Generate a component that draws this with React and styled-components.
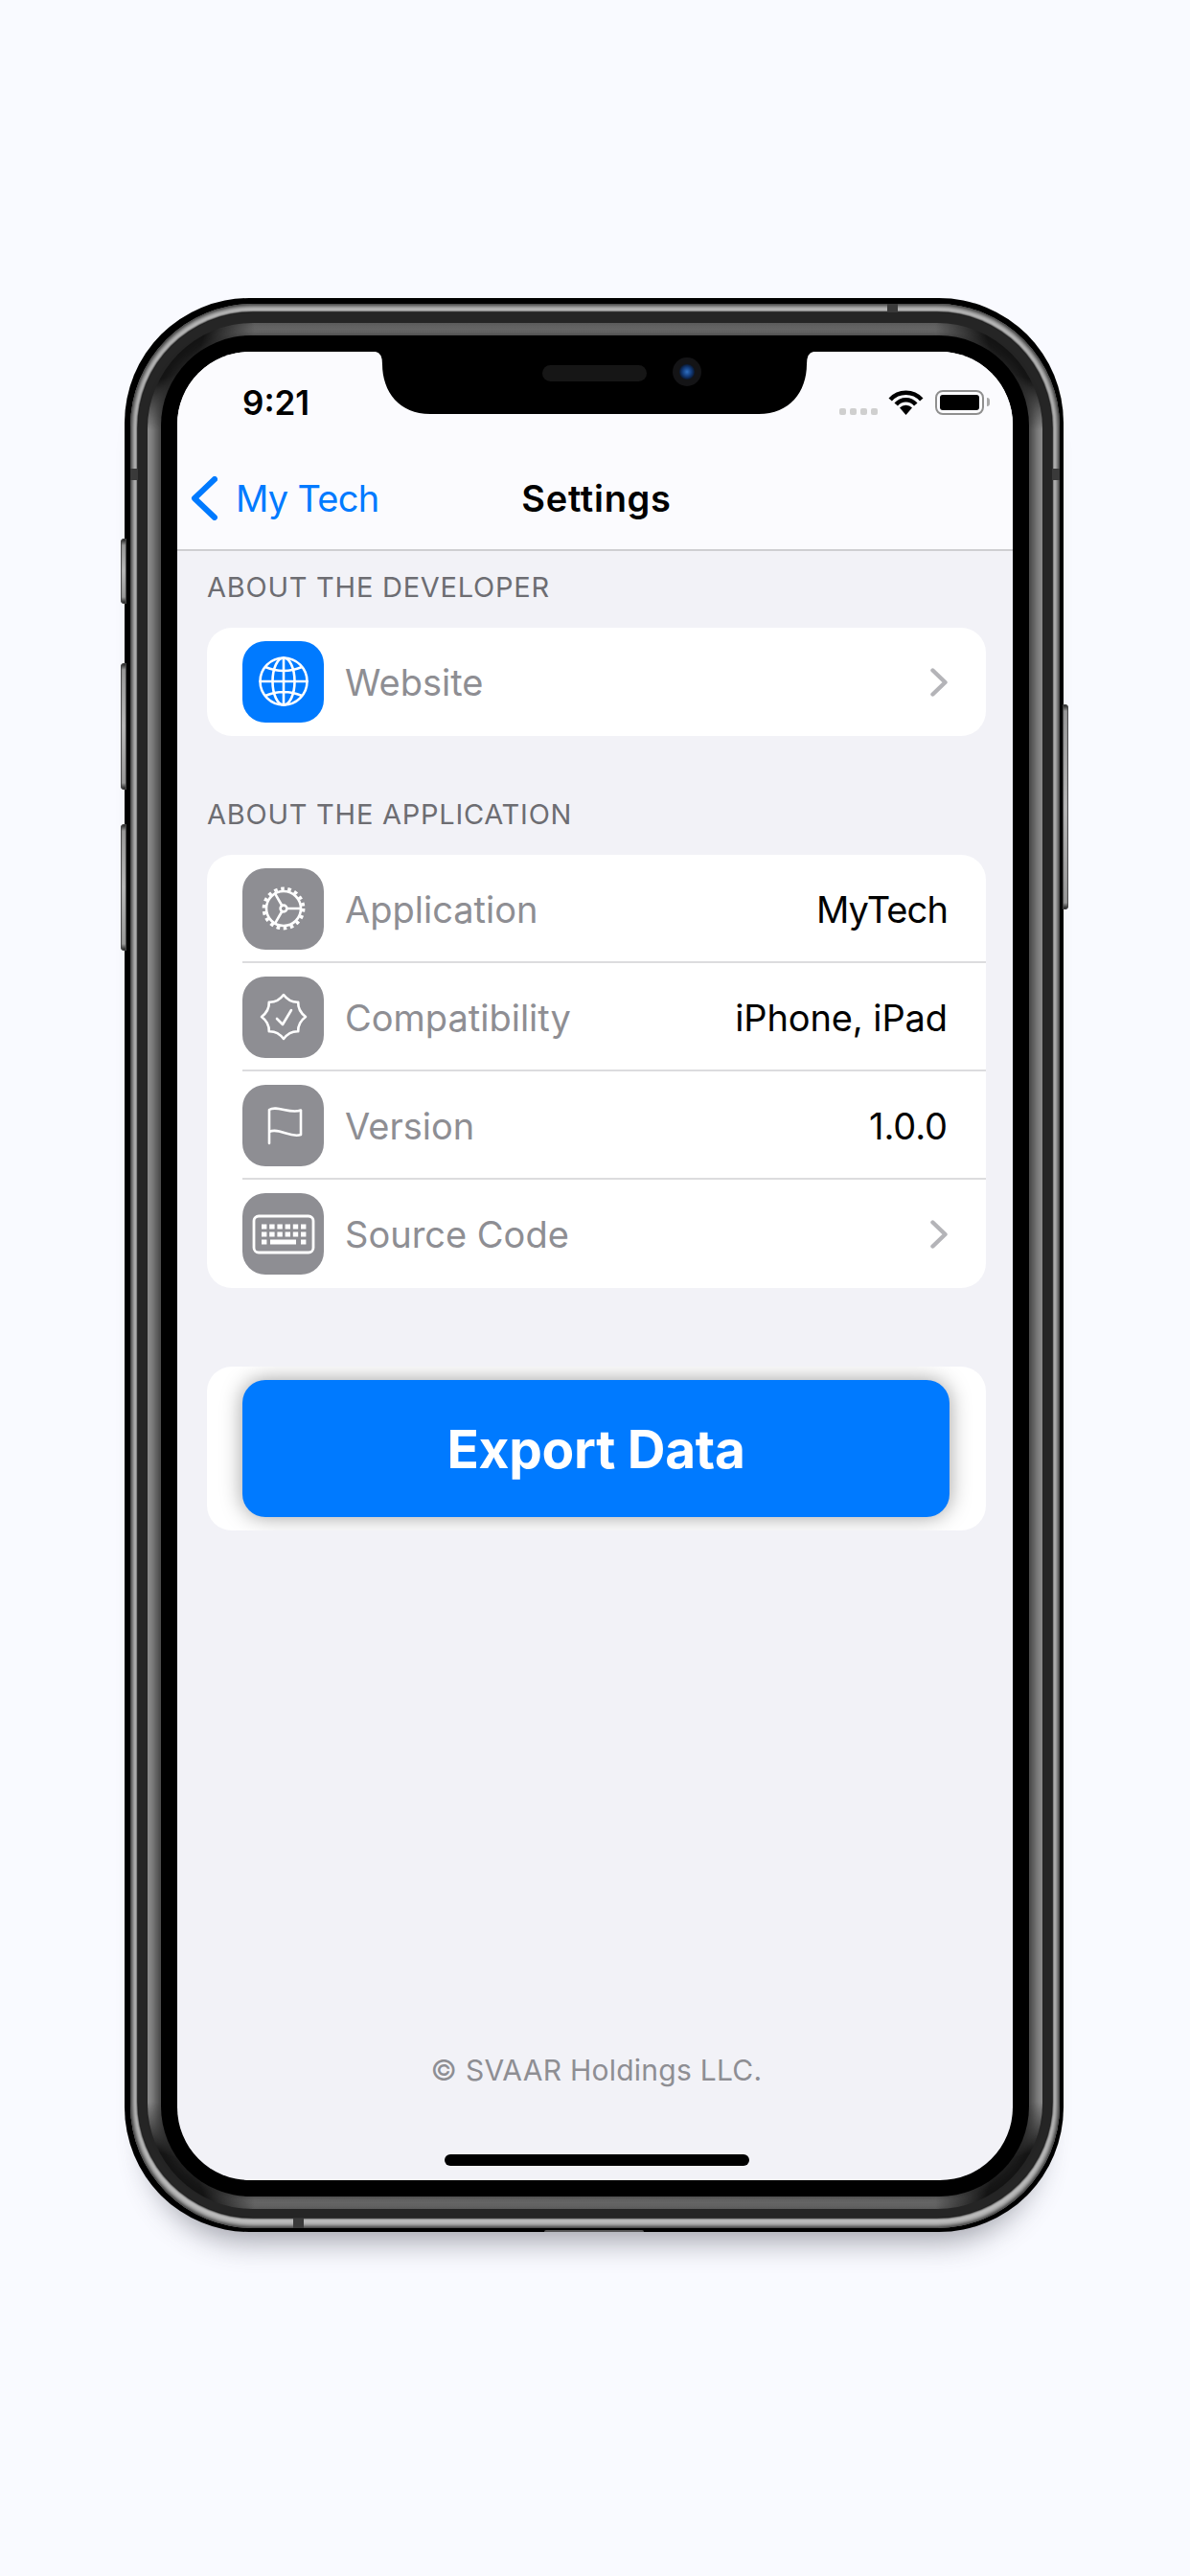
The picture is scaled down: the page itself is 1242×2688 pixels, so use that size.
import React from "react";
import styled, { createGlobalStyle } from "styled-components";

const GlobalStyle = createGlobalStyle`
  html, body {
    margin: 0;
    padding: 0;
    background: #f9faff;
  }
  * {
    box-sizing: border-box;
  }
`;

const Page = styled.div`
  width: 1242px;
  height: 2688px;
  padding: 311px 0 0 130px;
  background: #f9faff;
  font-family: Inter, "Noto Sans", sans-serif;
  overflow: hidden;
`;

const Phone = styled.div`
  position: relative;
  display: flex;
  width: 980px;
  height: 2018px;
  padding: 6px 4px 4px 6px;
  border-radius: 130px;
  background: #000;
  box-shadow: 0 34px 30px -24px rgba(70, 72, 84, 0.48);
`;

const SteelRing = styled.div`
  flex: 1;
  display: flex;
  padding: 9px 8px 11px 8px;
  border-radius: 128px;
  background: #bcbcbc;
  box-shadow: inset 0 0 4px 2px #2a2a2a;
`;

const DarkRing = styled.div`
  flex: 1;
  display: flex;
  padding: 11px 10px 9px 10px;
  border-radius: 120px;
  background: #252525;
  box-shadow: 0 0 2px 1px #000;
`;

const GreyRing = styled.div`
  flex: 1;
  display: flex;
  padding: 13px 14px 13px 14px;
  border-radius: 110px;
  background:
    radial-gradient(circle at 0 0, #141414 60px, rgba(20, 20, 20, 0) 112px),
    radial-gradient(circle at 100% 0, #141414 60px, rgba(20, 20, 20, 0) 112px),
    radial-gradient(circle at 0 100%, #141414 60px, rgba(20, 20, 20, 0) 112px),
    radial-gradient(circle at 100% 100%, #141414 60px, rgba(20, 20, 20, 0) 112px),
    linear-gradient(to bottom, #5a5a5a 0, #787878 13px, #8c8c8c 40px, #8c8c8c calc(100% - 40px), #787878 calc(100% - 13px), #5a5a5a 100%);
`;

const Bezel = styled.div`
  flex: 1;
  display: flex;
  padding: 17px;
  border-radius: 94px;
  background: #000;
  box-shadow:
    -7px 0 8px -1px rgba(40, 40, 40, 0.7),
    7px 0 8px -1px rgba(40, 40, 40, 0.7);
`;

const Screen = styled.div`
  position: relative;
  flex: 1;
  display: flex;
  flex-direction: column;
  border-radius: 76px;
  background: #f2f2f7;
  overflow: hidden;
`;

const SideButton = styled.div`
  position: absolute;
  top: ${(p) => p.$top}px;
  height: ${(p) => p.$height}px;
  width: 6px;
  ${(p) => (p.$right ? "right: -5px;" : "left: -4px;")}
  border-radius: ${(p) => (p.$right ? "0 4px 4px 0" : "4px 0 0 4px")};
  background: linear-gradient(to bottom, #111 0, #999 7px, #b8b8b8 50%, #999 calc(100% - 7px), #111 100%);
  box-shadow: inset 0 0 1px 1px #444;
`;

const Band = styled.div`
  position: absolute;
  background: #3a3a3a;
  top: ${(p) => p.$top}px;
  left: ${(p) => p.$left}px;
  width: ${(p) => p.$width}px;
  height: ${(p) => p.$height}px;
`;

const BottomBump = styled.div`
  position: absolute;
  left: 438px;
  bottom: 0;
  width: 104px;
  height: 2px;
  border-radius: 3px 3px 0 0;
  background: #555;
`;

const Notch = styled.svg`
  position: absolute;
  top: 0;
  left: 207px;
`;

const Header = styled.header`
  height: 208px;
  background: #fbfbfe;
  border-bottom: 2px solid #cfcfd2;
`;

const StatusBar = styled.div`
  display: flex;
  justify-content: space-between;
  height: 100px;
  padding: 38px 24px 0 68px;
`;

const Time = styled.span`
  font-size: 35px;
  line-height: 30px;
  font-weight: 600;
  color: #000;
`;

const StatusIcons = styled.div`
  display: flex;
  align-items: flex-end;
  height: 27px;
  margin-top: 1px;
`;

const SignalDots = styled.div`
  display: flex;
  gap: 4px;
  margin-right: 11px;
`;

const SignalDot = styled.span`
  width: 7px;
  height: 7px;
  border-radius: 2px;
  background: #cfcfcf;
`;

const Battery = styled.div`
  width: 51px;
  height: 26px;
  margin-left: 12px;
  padding: 3px;
  border: 2px solid #8f8f8f;
  border-radius: 8px;
`;

const BatteryFill = styled.div`
  height: 100%;
  border-radius: 3px;
  background: #000;
`;

const BatteryNub = styled.div`
  width: 3px;
  height: 9px;
  margin: 0 0 9px 3px;
  border-radius: 0 3px 3px 0;
  background: #a8a8a8;
`;

const NavBar = styled.nav`
  display: grid;
  grid-template-columns: 1fr auto 1fr;
  align-items: center;
  height: 106px;
  padding-left: 3px;
`;

const BackLink = styled.a`
  display: flex;
  align-items: center;
  gap: 19px;
  margin-left: 11px;
  font-size: 38px;
  letter-spacing: -0.7px;
  color: #007aff;
`;

const NavTitle = styled.h1`
  margin: 0;
  font-size: 38px;
  font-weight: 600;
  letter-spacing: 0.7px;
  color: #000;
`;

const Body = styled.main`
  flex: 1;
  display: flex;
  flex-direction: column;
  padding: 16px 28px 15px 31px;
`;

const Section = styled.section`
  margin-bottom: 60px;
`;

const SectionLabel = styled.h2`
  margin: 0 0 20px;
  font-size: 29px;
  line-height: 44px;
  font-weight: 400;
  letter-spacing: 0.75px;
  color: #6d6d72;
`;

const Card = styled.div`
  border-radius: 26px;
  background: #fff;
  overflow: hidden;
`;

const Row = styled.div`
  display: flex;
  align-items: center;
  height: 113px;
  margin-left: 37px;
  padding-right: 40px;
  box-shadow: ${(p) => (p.$last ? "none" : "inset 0 -2px 0 #dcdcde")};
`;

const IconTile = styled.div`
  display: flex;
  width: 85px;
  height: 85px;
  margin-right: 22px;
  border-radius: 24px;
  background: ${(p) => p.$color};
`;

const RowLabel = styled.span`
  flex: 1;
  font-size: 38px;
  letter-spacing: 0;
  color: #8e8e93;
`;

const RowValue = styled.span`
  font-size: 38px;
  letter-spacing: ${(p) => (p.$tight ? "-0.9px" : "-0.1px")};
  color: #000;
`;

const ButtonCard = styled(Card)`
  display: flex;
  height: 171px;
  margin-top: 22px;
  padding: 14px 38px 14px 37px;
`;

const ExportButton = styled.button`
  flex: 1;
  border: 0;
  border-radius: 24px;
  font-family: inherit;
  font-size: 55px;
  font-weight: 700;
  letter-spacing: -0.3px;
  color: #fff;
  background: #007aff;
  box-shadow: 0 0 22px rgba(0, 0, 0, 0.38);
`;

const Footer = styled.footer`
  margin-top: auto;
  font-size: 30px;
  line-height: 40px;
  letter-spacing: 0.25px;
  text-align: center;
  color: #8e8e93;
`;

const HomeBar = styled.div`
  align-self: center;
  width: 318px;
  height: 12px;
  margin-top: 68px;
  border-radius: 6px;
  background: #000;
`;

const NotchShape = () => (
  <Notch width="457" height="65" viewBox="0 0 457 65">
    <defs>
      <radialGradient id="lens">
        <stop offset="0" stopColor="#2f6fc0" />
        <stop offset="0.6" stopColor="#123a78" />
        <stop offset="1" stopColor="#0a1830" />
      </radialGradient>
    </defs>
    <path d="M0 0 H457 Q450 1 450 13 C450 42 432 65 400 65 H57 C25 65 7 42 7 13 Q7 1 0 0 Z" fill="#000" />
    <rect x="174" y="14" width="109" height="17" rx="8.5" fill="#161616" />
    <circle cx="325" cy="21" r="15" fill="#141416" />
    <circle cx="325" cy="21" r="8" fill="url(#lens)" />
  </Notch>
);

const WifiIcon = () => (
  <svg width="37" height="27" viewBox="0 0 37 27">
    <g fill="none" stroke="#000" strokeWidth="4.6">
      <path d="M2.2 11 A22 22 0 0 1 34.8 11" />
      <path d="M8.2 16 A13.5 13.5 0 0 1 28.8 16" />
    </g>
    <path d="M18.5 27 L12 19.5 A9 9 0 0 1 25 19.5 Z" fill="#000" />
  </svg>
);

const BackChevron = () => (
  <svg width="28" height="46" viewBox="0 0 28 46">
    <path d="M25 3 L4 23 L25 43" fill="none" stroke="#007aff" strokeWidth="6" strokeLinecap="round" strokeLinejoin="round" />
  </svg>
);

const RowChevron = () => (
  <svg width="18" height="30" viewBox="0 0 18 30">
    <path d="M2.5 2.5 L15.5 15 L2.5 27.5" fill="none" stroke="#b4b4b8" strokeWidth="4.4" strokeLinecap="round" strokeLinejoin="round" />
  </svg>
);

const TileSvg = ({ children, strokeWidth = 2.6 }) => (
  <svg width="85" height="85" viewBox="0 0 85 85" fill="none" stroke="#fff" strokeWidth={strokeWidth} strokeLinecap="round" strokeLinejoin="round">
    {children}
  </svg>
);

const GlobeIcon = () => (
  <TileSvg>
    <circle cx="43" cy="42" r="24.5" />
    <ellipse cx="43" cy="42" rx="11.5" ry="24.5" />
    <path d="M43 17.5 V66.5 M18.5 42 H67.5 M24 27 Q43 35 62 27 M24 57 Q43 49 62 57" />
  </TileSvg>
);

const GearIcon = () => (
  <TileSvg>
    <circle cx="43" cy="42" r="18" />
    <circle cx="43" cy="42" r="20.6" strokeWidth="3.6" strokeDasharray="3.6 3.6" strokeLinecap="butt" />
    <circle cx="43" cy="42" r="3.4" />
    <path d="M46.4 42 H61 M41.3 45 L34 57.6 M41.3 39 L34 26.4" />
  </TileSvg>
);

// eight pointed seal, scalloped between the points
const sealPath = () => {
  let d = "";
  for (let i = 0; i < 8; i++) {
    const a = (i * Math.PI) / 4 - Math.PI / 2;
    const b = a + Math.PI / 8;
    const c = a + Math.PI / 4;
    const pr = i % 2 ? 21.5 : 23;
    const nr = i % 2 ? 23 : 21.5;
    const px = 43 + pr * Math.cos(a);
    const py = 42 + pr * Math.sin(a);
    if (i === 0) d += `M${px.toFixed(1)} ${py.toFixed(1)}`;
    d += ` Q${(43 + 16 * Math.cos(b)).toFixed(1)} ${(42 + 16 * Math.sin(b)).toFixed(1)} ${(43 + nr * Math.cos(c)).toFixed(1)} ${(42 + nr * Math.sin(c)).toFixed(1)}`;
  }
  return d + " Z";
};

const SealIcon = () => (
  <TileSvg>
    <path d={sealPath()} />
    <path d="M36 44 L42 50 L51 35" />
  </TileSvg>
);

const FlagIcon = () => (
  <TileSvg>
    <path d="M28 61 V26 C36 21 50 31 61 26.5 V52 C50 56 38 44 28 49" />
  </TileSvg>
);

const keyRows = [32.5, 40.5];
const keyCols = [20, 28.2, 36.4, 44.6, 52.8, 61];

const KeyboardIcon = () => (
  <TileSvg strokeWidth="2.8">
    <rect x="12" y="24" width="62" height="38" rx="5" />
    <g fill="#fff" stroke="none">
      {keyRows.map((y) =>
        keyCols.map((x) => <rect key={`${x}-${y}`} x={x} y={y} width="5.4" height="5" />)
      )}
      <rect x="20" y="48.5" width="5.4" height="5" />
      <rect x="29" y="48.5" width="27" height="5" />
      <rect x="61" y="48.5" width="5.4" height="5" />
    </g>
  </TileSvg>
);

const App = () => {
  return (
    <Page>
      <GlobalStyle />
      <Phone>
        <SideButton $top={251} $height={68} />
        <SideButton $top={381} $height={132} />
        <SideButton $top={549} $height={132} />
        <SideButton $right $top={424} $height={214} />
        <SteelRing>
          <DarkRing>
            <GreyRing>
              <Bezel>
                <Screen>
                  <Header>
                    <StatusBar>
                      <Time>9:21</Time>
                      <StatusIcons>
                        <SignalDots>
                          <SignalDot />
                          <SignalDot />
                          <SignalDot />
                          <SignalDot />
                        </SignalDots>
                        <WifiIcon />
                        <Battery>
                          <BatteryFill />
                        </Battery>
                        <BatteryNub />
                      </StatusIcons>
                    </StatusBar>
                    <NavBar>
                      <BackLink>
                        <BackChevron />
                        My Tech
                      </BackLink>
                      <NavTitle>Settings</NavTitle>
                    </NavBar>
                  </Header>
                  <Body>
                    <Section>
                      <SectionLabel>ABOUT THE DEVELOPER</SectionLabel>
                      <Card>
                        <Row $last>
                          <IconTile $color="#007aff">
                            <GlobeIcon />
                          </IconTile>
                          <RowLabel>Website</RowLabel>
                          <RowChevron />
                        </Row>
                      </Card>
                    </Section>
                    <Section>
                      <SectionLabel>ABOUT THE APPLICATION</SectionLabel>
                      <Card>
                        <Row>
                          <IconTile $color="#8e8e93">
                            <GearIcon />
                          </IconTile>
                          <RowLabel>Application</RowLabel>
                          <RowValue $tight>MyTech</RowValue>
                        </Row>
                        <Row>
                          <IconTile $color="#8e8e93">
                            <SealIcon />
                          </IconTile>
                          <RowLabel>Compatibility</RowLabel>
                          <RowValue>iPhone, iPad</RowValue>
                        </Row>
                        <Row>
                          <IconTile $color="#8e8e93">
                            <FlagIcon />
                          </IconTile>
                          <RowLabel>Version</RowLabel>
                          <RowValue>1.0.0</RowValue>
                        </Row>
                        <Row $last>
                          <IconTile $color="#8e8e93">
                            <KeyboardIcon />
                          </IconTile>
                          <RowLabel>Source Code</RowLabel>
                          <RowChevron />
                        </Row>
                      </Card>
                    </Section>
                    <ButtonCard>
                      <ExportButton>Export Data</ExportButton>
                    </ButtonCard>
                    <Footer>© SVAAR Holdings LLC.</Footer>
                    <HomeBar />
                  </Body>
                  <NotchShape />
                </Screen>
              </Bezel>
            </GreyRing>
          </DarkRing>
        </SteelRing>
        <Band $top={178} $left={6} $width={8} $height={12} />
        <Band $top={178} $left={968} $width={8} $height={12} />
        <Band $top={6} $left={796} $width={11} $height={9} />
        <Band $top={2004} $left={176} $width={11} $height={10} />
        <BottomBump />
      </Phone>
    </Page>
  );
};

export default App;
